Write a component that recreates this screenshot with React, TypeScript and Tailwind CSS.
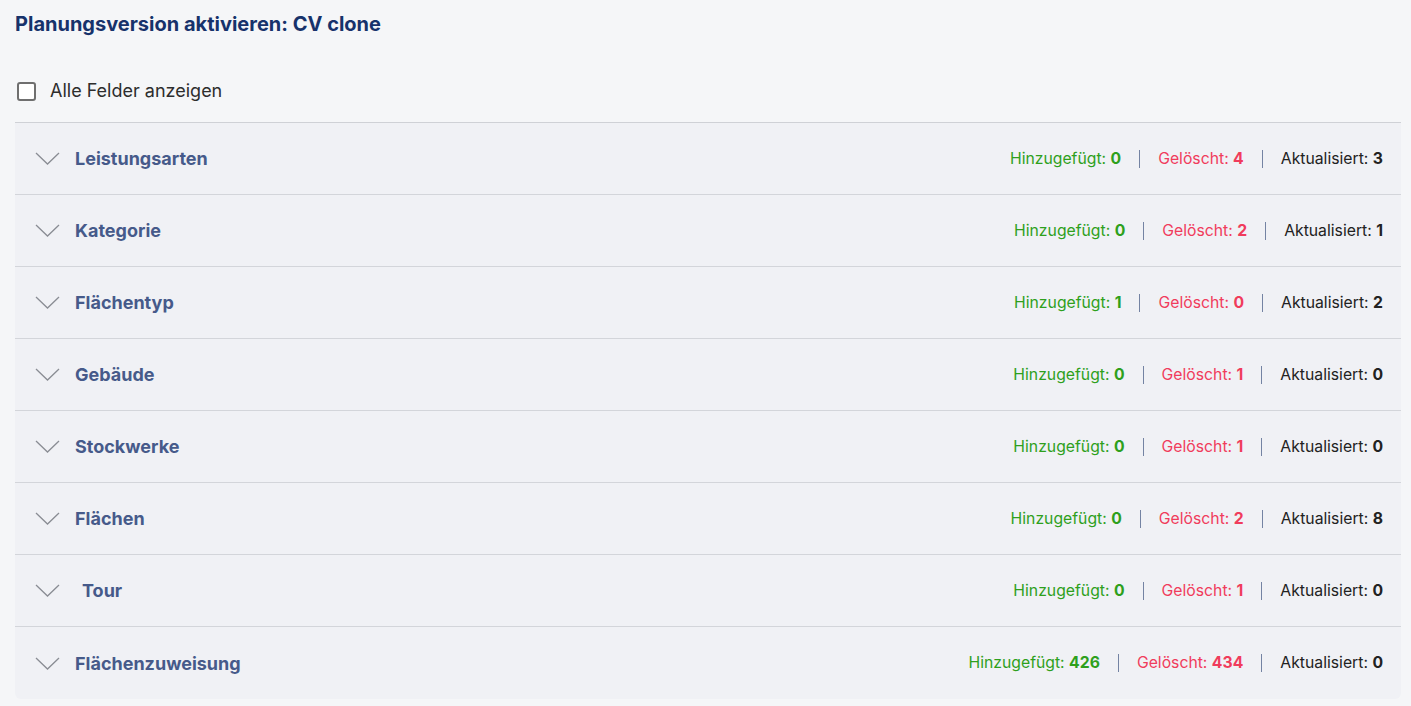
import React from "react";

type Row = { label: string; added: number; deleted: number; updated: number; indent?: boolean };

const rows: Row[] = [
  { label: "Leistungsarten", added: 0, deleted: 4, updated: 3 },
  { label: "Kategorie", added: 0, deleted: 2, updated: 1 },
  { label: "Flächentyp", added: 1, deleted: 0, updated: 2 },
  { label: "Gebäude", added: 0, deleted: 1, updated: 0 },
  { label: "Stockwerke", added: 0, deleted: 1, updated: 0 },
  { label: "Flächen", added: 0, deleted: 2, updated: 8 },
  { label: "Tour", added: 0, deleted: 1, updated: 0, indent: true },
  { label: "Flächenzuweisung", added: 426, deleted: 434, updated: 0 },
];

function Chevron() {
  return (
    <svg width="25" height="13" viewBox="0 0 25 13" className="shrink-0">
      <path d="M1 1 L12.5 12 L24 1" fill="none" stroke="#8a8d94" strokeWidth="1.3" />
    </svg>
  );
}

export default function App() {
  return (
    <div
      className="min-h-screen w-full bg-[#f5f6f8] pl-[15px] pr-[10px] pt-[10px]"
      style={{ fontFamily: "Inter, 'Noto Sans', sans-serif" }}
    >
      <h1 className="text-[20px] font-bold leading-[28px] text-[#17326b]">
        Planungsversion aktivieren: CV clone
      </h1>
      <div className="mt-[40px] flex items-center">
        <span className="ml-[2px] block h-[19px] w-[19px] rounded-[3px] border-2 border-[#6f6f6f] bg-white" />
        <span className="ml-[14px] text-[18px] leading-[26px] text-[#2d2d2d]">Alle Felder anzeigen</span>
      </div>
      <div className="mt-[18px] overflow-hidden rounded-b-[6px] border-t border-[#cfd1d6] bg-[#f0f1f5]">
        {rows.map((r, i) => (
          <div
            key={r.label}
            className={`flex h-[72px] items-center pl-[20px] pr-[18px] ${
              i < rows.length - 1 ? "border-b border-[#d3d5da]" : ""
            }`}
          >
            <Chevron />
            <span
              className={`${r.indent ? "ml-[22px]" : "ml-[15px]"} text-[18px] font-bold text-[#465a8a]`}
            >
              {r.label}
            </span>
            <div className="ml-auto flex items-center text-[15.75px]">
              <span className="text-[#2ea01c]">
                Hinzugefügt: <b className="font-bold">{r.added}</b>
              </span>
              <span className="mx-[18px] block h-[18px] w-px bg-[#7483a3]" />
              <span className="text-[#f03c5c]">
                Gelöscht: <b className="font-bold">{r.deleted}</b>
              </span>
              <span className="mx-[18px] block h-[18px] w-px bg-[#7483a3]" />
              <span className="text-[#222222]">
                Aktualisiert: <b className="font-bold">{r.updated}</b>
              </span>
            </div>
          </div>
        ))}
      </div>
    </div>
  );
}
